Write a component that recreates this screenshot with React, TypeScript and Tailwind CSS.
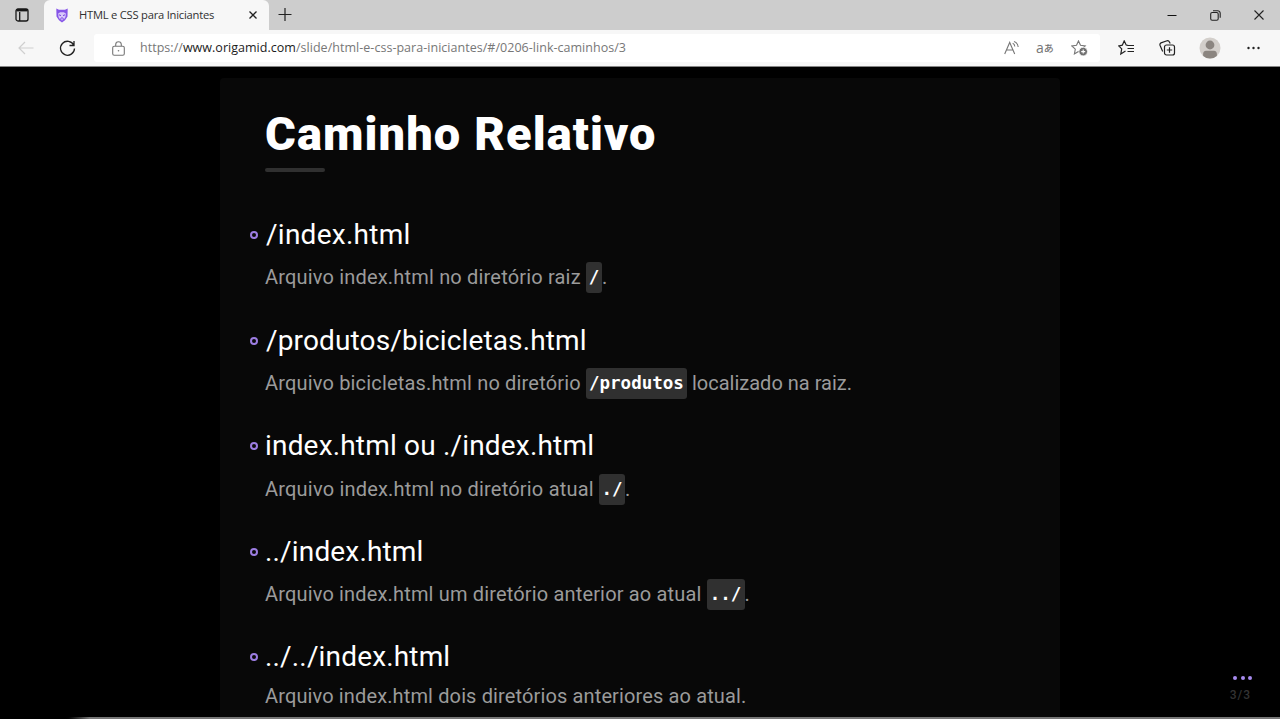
import type { ReactNode } from "react";

function Code({ children, className }: { children: ReactNode; className: string }) {
  return (
    <code
      className={`inline-flex h-[31px] shrink-0 items-center justify-center rounded-[3px] bg-[#303030] font-['DejaVu_Sans_Mono',monospace] text-[17.5px] font-bold tracking-normal text-white ${className}`}
    >
      {children}
    </code>
  );
}

function Item({ title, titleClass, textClass, children }: { title: string; titleClass: string; textClass: string; children: ReactNode }) {
  return (
    <li className="flex h-[105.6px] shrink-0 flex-col">
      <div className="flex h-[36px] items-center">
        <span className="mr-[7px] mt-[2px] size-[8px] rounded-full border-2 border-[#9b7ce0]" />
        <h2 className={`whitespace-pre text-[28px] leading-[36px] text-white ${titleClass}`}>{title}</h2>
      </div>
      <p className={`flex items-center whitespace-pre pl-[15px] text-[20px] leading-[31px] text-[#9b9b9b] ${textClass}`}>{children}</p>
    </li>
  );
}

function TabBar() {
  return (
    <header className="flex h-[30px] shrink-0 bg-[#cdcdcd]">
      <div className="flex w-[44px] items-center justify-center">
        <svg width="14" height="14" viewBox="0 0 14 14" fill="none" stroke="#171717" strokeWidth="1.3">
          <rect x="1" y="1" width="12" height="12" rx="2" />
          <path d="M1.5 2.2h11" strokeWidth="2.4" />
          <path d="M4.7 4v9" />
        </svg>
      </div>
      <div className="flex w-[225px] items-center rounded-t-[6px] bg-[#f7f7f7] pl-[12px]">
        <svg width="12" height="15" viewBox="0 0 12 15">
          <path d="M.3.5 3 1.7h6L11.7.5l-.2 8L9 12.2 6 14.6 3 12.2.5 8.5Z" fill="#8655e8" />
          <path d="m2.200 5.500 2-1.300h3.600l2 1.300-.3 3.500L8.300 11 6 12.500 3.700 11 2.500 9Z" fill="#d8c8fa" />
          <path d="m3 6.800 2 .8M9 6.800l-2 .8M6 9v2.500M4.500 10.500v1M7.500 10.500v1" stroke="#7742de" strokeWidth="1" />
        </svg>
        <span className="ml-[11px] w-[164px] whitespace-pre text-[11.200px] tracking-[-0.230px] text-[#303030]">HTML e CSS para Iniciantes</span>
        <svg className="ml-[6px]" width="8" height="8" viewBox="0 0 8 8" stroke="#222" strokeWidth="1.300">
          <path d="m.5.500 7 7m0-7-7 7" />
        </svg>
      </div>
      <svg className="ml-[9px] mt-[8px]" width="14" height="14" viewBox="0 0 14 14" stroke="#222" strokeWidth="1.200">
        <path d="M.5 6.500h13M7 0v13" />
      </svg>
      <div className="ml-auto flex items-center pr-[16px]">
        <svg width="10" height="10" viewBox="0 0 10 10" stroke="#111"><path d="M.5 5.500h9" /></svg>
        <svg className="ml-[33px]" width="11" height="11" viewBox="0 0 11 11" fill="none" stroke="#222" strokeWidth="1.100">
          <rect x=".7" y="2.500" width="7.500" height="7.800" rx="1.500" />
          <path d="M3 .7h4.500A2.500 2.500 0 0 1 10.200 3.200v4.600" />
        </svg>
        <svg className="ml-[33px]" width="10" height="10" viewBox="0 0 10 10" stroke="#222" strokeWidth="1.100"><path d="m.5.500 9 9m0-9-9 9" /></svg>
      </div>
    </header>
  );
}

function Toolbar() {
  return (
    <div className="flex h-[37px] shrink-0 items-center border-b border-[#858585] bg-[#f7f7f7]">
      <svg className="ml-[18px]" width="16" height="14" viewBox="0 0 16 14" fill="none" stroke="#cfcfcf" strokeWidth="1.200">
        <path d="M15.500 7H1m6-6L1 7l6 6" />
      </svg>
      <svg className="ml-[25px]" width="17" height="17" viewBox="0 0 17 17" fill="none" stroke="#222" strokeWidth="1.300">
        <path d="M14.800 5.200A7 7 0 1 0 15.500 8.500M15 1v4.500h-4.500" />
      </svg>
      <div className="ml-[18px] flex h-[28px] w-[1006px] items-center rounded-[3px] bg-white">
        <svg className="ml-[18px]" width="13" height="15" viewBox="0 0 13 15" fill="none" stroke="#777" strokeWidth="1.100">
          <rect x=".7" y="5.200" width="11.600" height="9" rx="1.500" />
          <path d="M3.700 5V3.500a2.800 2.800 0 0 1 5.600 0V5" />
          <circle cx="6.500" cy="9.700" r=".8" fill="#777" stroke="none" />
        </svg>
        <span className="ml-[15px] whitespace-pre text-[12.500px] tracking-[0.030px] text-[#777]">
          https://<span className="text-[#1c1c1c]">www.origamid.com</span>/slide/html-e-css-para-iniciantes/#/0206-link-caminhos/3
        </span>
        <div className="ml-auto flex items-center pr-[12px]">
          <svg width="15" height="14" viewBox="0 0 15 14" fill="none" stroke="#777" strokeWidth="1.100">
            <path d="m.7 13 5-11.500 5 11.500M2.500 9h6.500M8.700 2.300q2 1 2.100 3.200M10 .6q4 1.600 4.200 5.400" />
          </svg>
          <span className="ml-[17px] mr-[1px] flex w-[17px] items-center text-[#777]">
            <span className="text-[14px] leading-none">a</span>
            <span className="font-['Noto_Sans_CJK_JP',sans-serif] text-[10px] font-medium leading-none">あ</span>
          </span>
          <svg className="ml-[17px]" width="17" height="16" viewBox="0 0 17 16" fill="none" stroke="#777" strokeWidth="1.100">
            <path d="m7.500.900 2 4.400 4.700.6-3.500 3.200.9 4.800-4.100-2.400-4.100 2.400.9-4.800L.8 5.900l4.700-.6Z" />
            <circle cx="12.200" cy="11.600" r="4.300" fill="#707070" stroke="#fff" strokeWidth=".8" />
            <path d="M12.200 9.600v4M10.200 11.600h4" stroke="#fff" />
          </svg>
        </div>
      </div>
      <svg className="ml-[18px]" width="17" height="16" viewBox="0 0 17 16" fill="none" stroke="#222" strokeWidth="1.200">
        <path d="M10 5.300 8.200 5 6.200.900 4.300 5.200.8 5.900l2.900 3L2.800 14l4.700-2.900M9 5.500h7M9.500 8.500H16M9.500 11.500H16" />
      </svg>
      <svg className="ml-[24px]" width="17" height="16" viewBox="0 0 17 16" fill="none" stroke="#222" strokeWidth="1.200">
        <rect x="5.500" y="5" width="10" height="10" rx="2" />
        <path d="M10.500 7.300v5.400M7.800 10h5.400M3.700 11.500 1 5.200A2 2 0 0 1 2 2.900L8 .8q1.700-.4 2.400 1.100l.8 1.700" />
      </svg>
      <svg className="ml-[23px]" width="22" height="22" viewBox="0 0 22 22">
        <circle cx="11" cy="11" r="10.500" fill="#d3cfcb" />
        <circle cx="11" cy="8" r="4.400" fill="#8b8580" />
        <path d="M4.200 18.900Q3.500 13.700 7 13.700h8q3.500 0 2.800 5.200A10.400 10.400 0 0 1 4.200 18.900Z" fill="#8b8580" />
      </svg>
      <svg className="ml-[26px]" width="13" height="4" viewBox="0 0 13 4" fill="#222"><circle cx="1.500" cy="2" r="1.200" /><circle cx="6.500" cy="2" r="1.200" /><circle cx="11.500" cy="2" r="1.200" /></svg>
    </div>
  );
}

export default function App() {
  return (
    <div className="flex h-[719px] w-[1280px] flex-col overflow-hidden bg-black font-['Open_Sans',sans-serif]">
      <TabBar />
      <Toolbar />
      <main className="relative flex min-h-0 flex-1 justify-center overflow-hidden bg-black pt-[11px] font-['Roboto',sans-serif]">
        <article className="flex h-[660px] w-[840px] flex-col rounded-[4px] bg-[#080808] pl-[30px]">
          <h1 className="ml-[15px] mt-[27px] h-[58px] whitespace-pre text-[47px] font-black leading-[58px] tracking-[1.100px] text-white">Caminho Relativo</h1>
          <div className="ml-[15px] mt-[5px] h-[4px] w-[60px] shrink-0 rounded-[2px] bg-[#303030]" />
          <ul className="mt-[44px] flex flex-col">
            <Item title="/index.html" titleClass="mt-px pl-px tracking-[0.260px]" textClass="mt-[10px] h-[31px] tracking-[0.180px]">
              <span>Arquivo index.html no diretório raiz </span>
              <Code className="w-[16px]">/</Code>.
            </Item>
            <Item title="/produtos/bicicletas.html" titleClass="mt-[2px] pl-px tracking-[0.150px]" textClass="mt-[10px] h-[31px] tracking-[0.170px]">
              <span>Arquivo bicicletas.html no diretório </span>
              <Code className="w-[101px]">/produtos</Code>
              <span className="tracking-[0.010px]"> localizado na raiz.</span>
            </Item>
            <Item title="index.html ou ./index.html" titleClass="mt-[2px] tracking-[0.180px]" textClass="mt-[10.500px] h-[31px] tracking-[0.200px]">
              <span>Arquivo index.html no diretório atual </span>
              <Code className="w-[26px]">./</Code>.
            </Item>
            <Item title="../index.html" titleClass="mt-[2px] tracking-[0.160px]" textClass="mt-[10px] h-[31px] tracking-[0.160px]">
              <span>Arquivo index.html um diretório anterior ao atual </span>
              <Code className="w-[38px]">../</Code>.
            </Item>
            <Item title="../../index.html" titleClass="mt-[2px] tracking-[0.160px]" textClass="mt-[10px] h-[25px] tracking-[0.130px]">
              <span>Arquivo index.html dois diretórios anteriores ao atual.</span>
            </Item>
          </ul>
        </article>
        <div className="absolute right-[28px] top-[609px] flex flex-col items-end gap-[8px]">
          <div className="flex gap-[3.500px]">
            <i className="size-[4px] rounded-full bg-[#a78bef]" />
            <i className="size-[4px] rounded-full bg-[#a78bef]" />
            <i className="size-[4px] rounded-full bg-[#a78bef]" />
          </div>
          <span className="mr-[1px] text-[12px] font-medium leading-[14px] tracking-[1px] text-[#333]">3/3</span>
        </div>
      </main>
      <footer className="h-[2px] shrink-0 bg-gradient-to-r from-black from-[5%] via-[#777] via-[7%] to-[#777]" />
    </div>
  );
}
